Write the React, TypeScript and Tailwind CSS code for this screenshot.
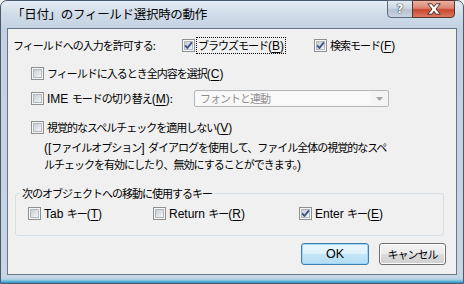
import React from "react";

function Box({ checked }: { checked?: boolean }) {
  return (
    <svg width="13" height="13" viewBox="0 0 13 13" className="shrink-0 block">
      <defs>
        <linearGradient id="cbin" x1="0" y1="0" x2="1" y2="1">
          <stop offset="0" stopColor="#c5cbd3" />
          <stop offset="1" stopColor="#f6f7f8" />
        </linearGradient>
      </defs>
      <rect x="0.5" y="0.5" width="12" height="12" fill="#f6f6f6" stroke="#8e8f8f" />
      <rect x="2.5" y="2.5" width="8" height="8" fill="url(#cbin)" stroke="#b3b8be" />
      {checked && (
        <path d="M3.2 6.4 L5.4 9 L9.9 3.3" stroke="#3d5388" strokeWidth="1.9" fill="none" strokeLinejoin="round" />
      )}
    </svg>
  );
}

function Mn({ c }: { c: string }) {
  return (
    <span className="font-['Liberation_Sans',sans-serif] text-[12px] tracking-normal">
      (<span className="underline underline-offset-[2px]">{c}</span>)
    </span>
  );
}

function L({ t }: { t: string }) {
  return <span className="font-['Liberation_Sans',sans-serif] text-[12px] tracking-normal whitespace-pre">{t}</span>;
}

export default function App() {
  return (
    <div className="w-[464px] h-[284px] overflow-hidden font-['Noto_Sans_CJK_JP',sans-serif] text-black bg-[#f0f0f0]">
      <div className="w-[464px] h-[284px] flex flex-col rounded-t-[7px] border border-[#4a5b6d] bg-[linear-gradient(180deg,#e6edf5_0px,#cfdbe8_14px,#c3d1e1_28px,#c8d5e3_100%)]">
        {/* title bar */}
        <div className="h-[27px] flex items-start shrink-0">
          <div className="pl-[11px] pt-[4px] text-[12.5px] leading-[18px] tracking-[-0.3px] text-black whitespace-nowrap">
            「日付」のフィールド選択時の動作
          </div>
          <div className="ml-auto mr-[8px] flex items-start">
            <div className="w-[26px] h-[18px] -mt-px rounded-bl-[4px] border border-[#5b6c7f] bg-[linear-gradient(180deg,#e4ebf2_0%,#cdd7e2_45%,#b4c2d1_55%,#c9d4df_100%)] flex items-center justify-center">
              <span className="text-white font-['DejaVu_Sans',sans-serif] font-bold text-[12px] leading-none [text-shadow:0_0_1px_#2d3a48,0_0_1px_#2d3a48,0_0_1px_#2d3a48]">
                ?
              </span>
            </div>
            <div className="w-[43px] h-[18px] -mt-px -ml-px rounded-br-[4px] border border-[#5a3530] bg-[linear-gradient(180deg,#eab2a5_0%,#dc8470_45%,#c9472f_55%,#d97a60_100%)] flex items-center justify-center">
              <svg width="16" height="12" viewBox="0 0 16 12">
                <path
                  d="M1.8 0.8 H5.8 L8 3.8 L10.2 0.8 H14.2 L10 6 L14.2 11.2 H10.2 L8 8.2 L5.8 11.2 H1.8 L6 6 Z"
                  fill="#ffffff"
                  stroke="#3b2320"
                  strokeWidth="0.9"
                  strokeLinejoin="round"
                />
              </svg>
            </div>
          </div>
        </div>

        {/* client */}
        <div className="mx-[6px] h-[247px] shrink-0 border border-[#66778a] bg-[#f0f0f0] flex flex-col text-[11px] tracking-[-1px] leading-[16px]">
          {/* row 1 */}
          <div className="mt-[8px] h-[16px] flex items-center pl-[5px]">
            <div className="w-[169px] whitespace-nowrap">フィールドへの入力を許可する:</div>
            <div className="w-[132px] flex items-center gap-[1px]">
              <Box checked />
              <span className="border border-dotted border-black px-[1px] leading-[14px] whitespace-nowrap">
                ブラウズモード<Mn c="B" />
              </span>
            </div>
            <div className="flex items-center gap-[3px]">
              <Box checked />
              <span className="whitespace-nowrap">
                検索モード<Mn c="F" />
              </span>
            </div>
          </div>

          {/* row 2 */}
          <div className="mt-[12px] h-[16px] flex items-center pl-[23px] gap-[3px]">
            <Box />
            <span className="whitespace-nowrap">
              フィールドに入るとき全内容を選択<Mn c="C" />
            </span>
          </div>

          {/* row 3 */}
          <div className="mt-[9px] h-[17px] flex items-center pl-[23px]">
            <div className="w-[163px] flex items-center gap-[3px]">
              <Box />
              <span className="whitespace-nowrap">
                <L t="IME " />モードの切り替え<Mn c="M" />:
              </span>
            </div>
            <div className="w-[195px] h-[17px] rounded-[2px] border border-[#b4b8bc] bg-[#f4f4f4] flex items-center">
              <div className="flex-1 h-[13px] ml-[1px] bg-[#f9f9f9] pl-[4px] text-[#8f8f8f] leading-[13px] whitespace-nowrap">
                フォントと連動
              </div>
              <div className="w-[17px] flex items-center justify-center">
                <svg width="7" height="4" viewBox="0 0 7 4">
                  <path d="M0 0 H7 L3.5 4 Z" fill="#a3a7ab" />
                </svg>
              </div>
            </div>
          </div>

          {/* row 4 */}
          <div className="mt-[12px] h-[16px] flex items-center pl-[23px] gap-[3px]">
            <Box />
            <span className="whitespace-nowrap">
              視覚的なスペルチェックを適用しない<Mn c="V" />
            </span>
          </div>

          {/* note */}
          <div className="mt-[4px] pl-[36px] whitespace-nowrap leading-[16px]">
            <L t="([" />ファイルオプション<L t="] " />
            ダイアログを使用して、ファイル全体の視覚的なスペ
            <br />
            ルチェックを有効にしたり、無効にすることができます。<L t=")" />
          </div>

          {/* group */}
          <fieldset className="mt-[12px] ml-[7px] w-[429px] h-[51px] border border-[#d5dfe5] rounded-[3px] px-0 pb-0">
            <legend className="ml-[4px] px-[2px] leading-[16px] whitespace-nowrap">
              次のオブジェクトへの移動に使用するキー
            </legend>
            <div className="mt-[4px] flex items-center h-[16px]">
              <div className="ml-[12px] w-[125px] flex items-center gap-[3px]">
                <Box />
                <span className="whitespace-nowrap">
                  <L t="Tab " />キー<Mn c="T" />
                </span>
              </div>
              <div className="w-[146px] flex items-center gap-[3px]">
                <Box />
                <span className="whitespace-nowrap">
                  <L t="Return " />キー<Mn c="R" />
                </span>
              </div>
              <div className="flex items-center gap-[3px]">
                <Box checked />
                <span className="whitespace-nowrap">
                  <L t="Enter " />キー<Mn c="E" />
                </span>
              </div>
            </div>
          </fieldset>

          {/* buttons */}
          <div className="mt-auto mb-[9px] flex justify-end gap-[10px] pr-[10px]">
            <div className="w-[68px] h-[22px] rounded-[3px] border border-[#3c7fb1] bg-[linear-gradient(180deg,#ecf7fd_0%,#def1fb_48%,#c4e6f8_52%,#b3dbf1_100%)] shadow-[inset_0_0_0_1px_#9fd6f3] flex items-center justify-center tracking-normal font-['Liberation_Sans',sans-serif] text-[12.5px]">
              OK
            </div>
            <div className="w-[67px] h-[22px] rounded-[3px] border border-[#707070] bg-[linear-gradient(180deg,#f3f3f3_0%,#ebebeb_48%,#dddddd_52%,#cfcfcf_100%)] shadow-[inset_0_0_0_1px_#fcfcfc] flex items-center justify-center">
              キャンセル
            </div>
          </div>
        </div>

        {/* bottom frame */}
        <div className="flex-1 mx-0 bg-[linear-gradient(180deg,#cbd8e5_0%,#b9d3e6_50%,#5cb5da_80%,#3a86b0_100%)]" />
      </div>
    </div>
  );
}
